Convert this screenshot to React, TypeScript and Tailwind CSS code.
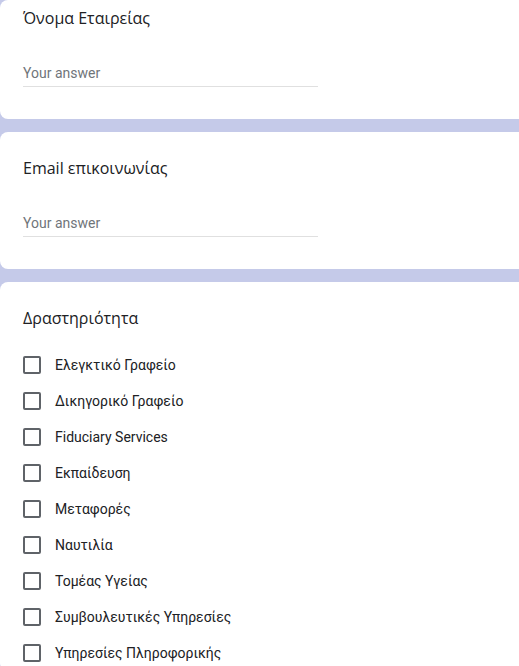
import React from "react";

const items = [
  "Ελεγκτικό Γραφείο",
  "Δικηγορικό Γραφείο",
  "Fiduciary Services",
  "Εκπαίδευση",
  "Μεταφορές",
  "Ναυτιλία",
  "Τομέας Υγείας",
  "Συμβουλευτικές Υπηρεσίες",
  "Υπηρεσίες Πληροφορικής",
];

function TextCard({ title, first }: { title: string; first?: boolean }) {
  return (
    <div
      className={`bg-white rounded-l-lg pl-[23px] pb-[32px] ${first ? "pt-[6px]" : "pt-[24px]"}`}
    >
      <div
        className="text-[16px] leading-[24px] text-[#202124]"
        style={{ fontFamily: '"Open Sans", Roboto, sans-serif' }}
      >
        {title}
      </div>
      <div className="mt-[25px] h-[32px] pt-[6px] w-[295px] border-b border-[#e0e0e0] flex items-center text-[14px] text-[#70757a] font-['Roboto',sans-serif]">
        Your answer
      </div>
    </div>
  );
}

export default function App() {
  return (
    <div className="min-h-screen h-[666px] overflow-hidden bg-[#c5cae9] flex flex-col gap-[13px]">
      <TextCard title="Όνομα Εταιρείας" first />
      <TextCard title="Email επικοινωνίας" />
      <div className="bg-white rounded-l-lg pl-[23px] pt-[24px] flex-1">
        <div
          className="text-[16px] leading-[24px] text-[#202124]"
          style={{ fontFamily: '"Open Sans", Roboto, sans-serif' }}
        >
          Δραστηριότητα
        </div>
        <div className="mt-[17px] flex flex-col">
          {items.map((it) => (
            <div key={it} className="h-[36px] flex items-center gap-[14px]">
              <div className="w-[18px] h-[18px] border-2 border-[#5f6368] rounded-[2px]" />
              <span className="text-[14px] text-[#202124] font-['Roboto',sans-serif]">{it}</span>
            </div>
          ))}
        </div>
      </div>
    </div>
  );
}
